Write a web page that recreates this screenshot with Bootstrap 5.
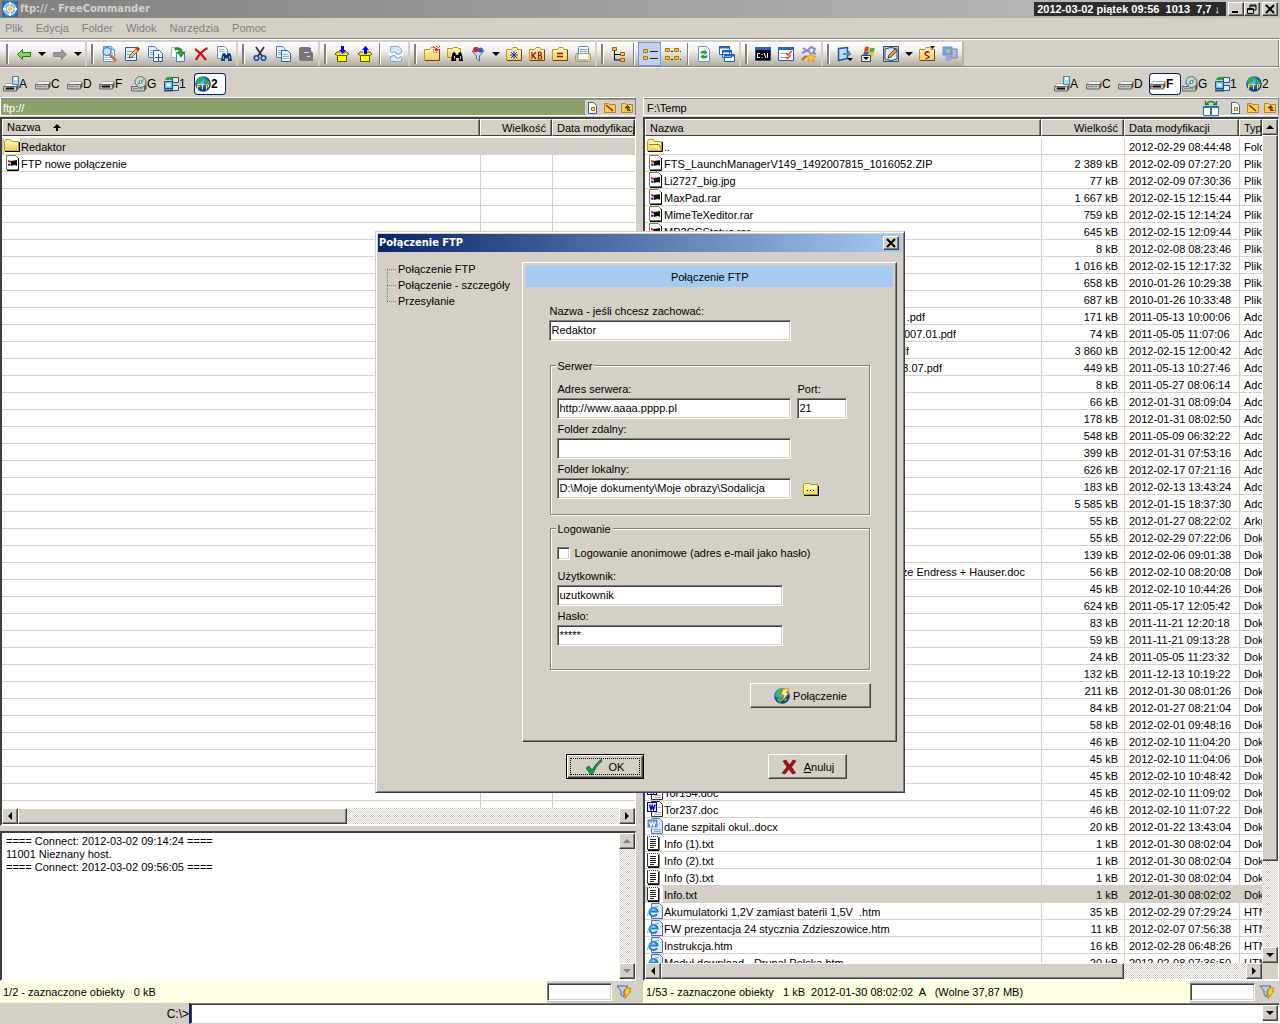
<!DOCTYPE html>
<html lang="pl">
<head>
<meta charset="utf-8">
<meta name="viewport" content="width=device-width, initial-scale=1">
<title>ftp:// - FreeCommander</title>
<link href="https://cdn.jsdelivr.net/npm/bootstrap@5.3.0/dist/css/bootstrap.min.css" rel="stylesheet">
<style>
:root{--face:#d4d0c8;--shade:#808080;--dark:#404040;--sky:#a6caf0}
body{font-family:"Liberation Sans",sans-serif;font-size:11px;line-height:16px;color:#000;background:var(--face)}
svg{display:block;flex:none}
.ic{width:16px;height:16px}
button,input{font:inherit;color:inherit;border-radius:0}
button{padding:0;border:0;background:none}
.raised{background:var(--face);border:1px solid;border-color:#fff var(--dark) var(--dark) #fff;box-shadow:inset -1px -1px var(--shade)}
.sunk{background:#fff;border:1px solid;border-color:var(--shade) #fff #fff var(--shade);box-shadow:inset 1px 1px var(--dark),inset -1px -1px var(--face)}
.app-title{height:18px;background:linear-gradient(90deg,#808080,#c0c0c0);color:var(--face);padding:0 2px;gap:2px}
.caption{font-family:"DejaVu Sans Condensed","DejaVu Sans",sans-serif;font-weight:bold}
.clock{background:#2b2b2b;color:#fff;height:14px;line-height:14px;padding:0 6px 0 3px;white-space:pre}
.winbtn{width:16px;height:14px}
.menu{height:20px;color:var(--shade);gap:13px;padding-left:5px}
.menu a{color:inherit;text-decoration:none}
.tools{height:30px;border:1px solid;border-color:var(--shade) #fff #fff;border-left:0;box-shadow:inset 0 1px #fff,inset -1px -1px var(--shade);padding:3px 0 1px}
.band{background:linear-gradient(#fff,#f2f0ec 35%,#d4d0c8 65%,#b3ab9f);border-right:2px solid var(--face);padding-right:1px}
.band:first-child{padding-left:2px}
.band:last-child{border-right-color:#b8b4aa}
.grip{width:3px;margin:2px 3px 2px 4px;border-left:2px solid var(--shade);border-right:1px solid #fff}
.tb{width:23px;display:flex;align-items:center;justify-content:center}
.tb.on{background:#c1d2ee;border:1px solid #7a96df}
.dd{width:13px;display:flex;align-items:center;justify-content:center}
.vsep{width:2px;margin:1px 3px;background:var(--shade);border-right:1px solid #fff}
.drives{height:29px;padding:2px 2px 0 3px}
.drive{width:32px;height:20px;display:flex;align-items:center;white-space:nowrap;font-size:12px}
.drive.on{width:30px;margin-right:2px;background:#fff;border-radius:3px;box-shadow:0 0 0 1px #0a246a;font-weight:bold}
.panes{gap:7px;padding-right:1px;min-height:0}
.pane{flex:1 1 0;min-width:0}
.pathbar{height:19px;flex:none;border:1px solid #fff;border-right-color:var(--shade);box-shadow:inset 0 1px var(--shade);padding:2px 0 0 3px}
.ftp-path{background:#8ca16b;color:#fff;padding-left:2px}
.path-icons{gap:1px;background:var(--face);align-self:stretch}
.filebox{flex:1 1 0;margin-top:1px;background:#fff;border:2px solid;border-right-width:1px;border-color:var(--dark) #fff #fff var(--dark);min-height:0}
.rows{flex:1 1 0;min-width:0;min-height:0;overflow:hidden}
.files{width:100%;table-layout:fixed;border-collapse:separate;border-spacing:0}
.files td,.files th{white-space:nowrap;overflow:hidden;font-weight:normal}
.files th{padding:0;border-bottom:2px solid #fff}
.headcell{height:17px;line-height:17px;background:var(--face);border:1px solid;border-color:#fff var(--dark) var(--dark) #fff;box-shadow:inset -1px 0 var(--shade);padding:0 5px 0 4px}
.files td{height:17px;line-height:14px;padding:2px 0 0 4px;border-bottom:1px solid var(--face)}
.files td+td{border-left:1px solid var(--face)}
.files .num{text-align:right;padding-right:6px}
.files td:first-child{padding:0 0 0 2px}
.files tr.sel td{background:var(--face)}
.entry{display:flex;height:16px;line-height:18px}
.entry .ic{margin-right:1px}
.sel .ic{background:#fff}
.tail{text-align:right;overflow:hidden}
.c-size{width:72px}.c-date{width:83px}.c-sizer{width:83px}.c-dater{width:115px}.c-type{width:23px}
.track{background:repeating-conic-gradient(#fff 0 25%,#d4d0c8 0 50%) 0 0/2px 2px}
.sbtn{width:16px;height:16px;flex:none;display:flex;align-items:center;justify-content:center}
.corner{background:var(--face)}
.log{height:150px;flex:none;margin-top:5px;border:2px solid;border-right-width:1px;border-color:var(--dark) #fff #fff var(--dark);background:#fff}
.logtext{line-height:13px;padding:2px 4px;white-space:pre}
.status{height:22px;flex:none;background:#ffffe1}
.status .msg{white-space:pre;padding-left:3px}
.filt{background:var(--face);padding-right:4px;gap:4px}
.filt input{width:65px;height:18px}
.cmd{height:21px;flex:none}
.prompt{width:189px;text-align:right;line-height:22px;font-size:12px}
.cmdbox{border:1px solid;border-color:var(--shade) #fff var(--face) var(--shade);box-shadow:inset 1px 1px var(--dark);background:#fff;padding:1px 1px 0 2px;border-left:2px solid #0a246a}
.cmdbox input{border:0;outline:0;background:none;min-width:0}
.veil{pointer-events:none}
.dlg{width:530px;background:var(--face);border:1px solid;border-color:var(--face) var(--dark) var(--dark) var(--face);box-shadow:inset 1px 1px #fff,inset -1px -1px var(--shade);padding:2px;pointer-events:auto}
.dlg-title{height:18px;background:linear-gradient(90deg,#0a246a,#a6caf0);color:#fff;padding:0 3px 0 1px}
.dlg-body{padding:9px 5px 11px 9px}
.tree{width:136px;padding:0}
.tree li{padding-left:11px;position:relative;white-space:nowrap}
.tree li::before{content:"";position:absolute;left:0;top:8px;width:9px;border-top:1px dotted var(--shade)}
.tree li+li::after{content:"";position:absolute;left:0;top:-8px;height:16px;border-left:1px dotted var(--shade)}
.sheet{border:1px solid;border-color:#fff var(--dark) var(--dark) #fff;box-shadow:inset -1px -1px var(--shade);padding:3px;margin-top:1px;height:480px;width:376px}
.sheet-head{background:var(--sky);height:21px;line-height:22px;text-align:center}
.sheet-body{padding:15px 22px 0 23px}
.sheet label{display:block;height:18px;line-height:18px}
.sheet .sunk,.filt .sunk{padding:0 1px;outline:0;display:block}
.sheet .sunk{height:21px;margin-bottom:1px;padding-bottom:2px}
.w-name{width:242px}.w-addr{width:234px}.w-port{width:50px}.w-user{width:226px}
.etch{position:relative;border:1px solid var(--shade);box-shadow:1px 1px #fff,inset 1px 1px #fff;padding:0 6px;width:320px;margin:0 0 0 1px;min-width:0}
.etch legend{position:absolute;top:-8px;left:5px;width:auto;margin:0;padding:0 2px 0 1px;background:var(--face);font-size:11px;line-height:16px;float:none}
.server{height:150px;margin-top:24px;padding-top:14px}
.addr-row{gap:6px}
.login{height:142px;margin-top:13px;padding-top:15px}
.anon{gap:4px;margin-bottom:5px}
.sheet .tick{appearance:none;width:13px;height:13px;margin:0;flex:none;padding:0}
.pushb{display:flex;align-items:center;justify-content:center;gap:3px;height:25px}
.go{width:121px;margin:13px 0 0 auto}
.okb{width:78px;border-color:#000;box-shadow:inset 1px 1px #fff,inset -1px -1px var(--dark),inset -2px -2px var(--shade);outline:1px dotted #000;outline-offset:-5px}
.noa{width:79px}
.foot{padding:12px 50px 0 179px}
</style>
</head>
<body class="vh-100 overflow-hidden d-flex flex-column position-relative">

<svg width="0" height="0" class="position-absolute" aria-hidden="true">
<defs>
<linearGradient id="gy" x2="0" y2="1"><stop stop-color="#fffbc8"/><stop offset="1" stop-color="#f4c860"/></linearGradient>
<radialGradient id="gb" cx=".4" cy=".35"><stop stop-color="#8fd6ff"/><stop offset=".7" stop-color="#1b6cd0"/><stop offset="1" stop-color="#0a3a8a"/></radialGradient>
</defs>
<symbol id="logo" viewBox="0 0 16 16"><rect width="16" height="16" fill="#35679b"/><circle cx="8" cy="8" r="7.500" fill="#3a8be0"/><circle cx="8" cy="8" r="5.800" fill="#7cc0f5" stroke="#d8efff"/><path d="M8 1v3M8 12v3M1 8h3M12 8h3" stroke="#fff" stroke-width="2"/><circle cx="8" cy="8" r="2.800" fill="#f7c54a" stroke="#fff6c0"/></symbol>
<symbol id="back" viewBox="0 0 16 16"><path d="M1.500 8.500l5-5v3h8v4h-8v3z" fill="#8fd05a" stroke="#1e7a1e"/></symbol>
<symbol id="fwd" viewBox="0 0 16 16"><path d="M14.500 8.500l-5-5v3h-8v4h8v3z" fill="#999" stroke="#888"/></symbol>
<symbol id="down" viewBox="0 0 8 5"><path d="M0 0h8L4 4z"/></symbol>
<symbol id="paper" viewBox="0 0 16 16"><path d="M2.500.5h8l3 3v12h-11z" fill="#f4f8ff" stroke="#6a8fc8"/><path d="M10.500.5v3h3" fill="#c4d8f4" stroke="#6a8fc8"/><path d="M4 5.500h6M4 7.500h8M4 9.500h8M4 11.500h8M4 13.500h6" stroke="#9bbbe6"/></symbol>
<symbol id="view" viewBox="0 0 16 16"><use href="#paper"/><circle cx="6" cy="5.500" r="4" fill="#bfe3ff" stroke="#4b86c8" stroke-width="1.500"/><path d="M9 9l6 6" stroke="#c86c34" stroke-width="2.500"/></symbol>
<symbol id="edit" viewBox="0 0 16 16"><path d="M1.500 1.500h11v13h-11z" fill="#e4eefc" stroke="#2858a8"/><path d="M3 5.500h7M3 8.500h5M3 11.500h8" stroke="#7ba4dc"/><path d="M5 12l1-3 7-7 2 2-7 7z" fill="#f7c54a" stroke="#604020" stroke-width=".8"/><path d="M12.500 1.500l2.500 2.500" stroke="#d02020" stroke-width="3"/></symbol>
<symbol id="pages" viewBox="0 0 16 16"><path d="M1.500.5h6l3 3v8h-9z" fill="#eef5ff" stroke="#4a7cc4"/><path d="M3 4.500h5M3 6.500h5M3 8.500h5" stroke="#8fb4e4"/><path d="M6.500 4.500h6l3 3v8h-9z" fill="#eef5ff" stroke="#2f5fae"/><path d="M8 8.500h5M8 10.500h6M8 12.500h6" stroke="#8fb4e4"/></symbol>
<symbol id="copyto" viewBox="0 0 16 16"><use href="#pages"/><path d="M8 8h6v7H8z" fill="#fff"/><path d="M11.500 8v7M8 11.500h7" stroke="#20509c"/></symbol>
<symbol id="moveto" viewBox="0 0 16 16"><path d="M1.500 1.500h7v10h-7z" fill="#fff" stroke="#5b88c8" stroke-dasharray="1 1"/><path d="M6.500 6.500h8v9h-8z" fill="#eef5ff" stroke="#4a7cc4"/><path d="M5 2q8-1 7 4h3l-4 5-4-5h3q0-3-5-2z" fill="#2da02d" stroke="#0c640c" stroke-width=".6"/></symbol>
<symbol id="del" viewBox="0 0 16 16"><path d="M2 3q6 4 11 11M14.500 2Q7 6 3 14" stroke="#d01010" stroke-width="2.200" fill="none"/></symbol>
<symbol id="find" viewBox="0 0 16 16"><path d="M1.500.5h7l3 3v9h-10z" fill="#f4f8ff" stroke="#6a8fc8"/><path d="M3 3.500h5M3 5.500h6" stroke="#9bbbe6"/><path d="M5 15l1-6q.500-2 2-2t2 2h1q.500-2 2-2t2 2l1 6h-4v-3h-3v3z" fill="#0b3a78"/><path d="M7.500 10v3M13.500 10v3" stroke="#6fa8e0"/></symbol>
<symbol id="cut" viewBox="0 0 16 16"><path d="M4 1l6 9M12 1L6 10" stroke="#334" stroke-width="1.800"/><circle cx="4.500" cy="12" r="2.300" fill="none" stroke="#1850b0" stroke-width="1.600"/><circle cx="11.500" cy="12" r="2.300" fill="none" stroke="#1850b0" stroke-width="1.600"/></symbol>
<symbol id="paste" viewBox="0 0 16 16"><path d="M1 2l2-1h8l2 1v3l2 2v8H3l-2-1z" fill="#777"/><path d="M6 6.500h5M9 10.500h3" stroke="#ddd"/></symbol>
<symbol id="box" viewBox="0 0 16 16"><path d="M1 8l3 2h8l3-2-2-2h-3M1 8l2-2h3" fill="#ee0" stroke="#550"/><path d="M3.500 9.500h9v6h-9z" fill="#ff0" stroke="#550"/></symbol>
<symbol id="pack" viewBox="0 0 16 16"><use href="#box"/><path d="M7 0h3v4h2L8.500 8 5 4h2z" fill="#0000e0"/></symbol>
<symbol id="unpack" viewBox="0 0 16 16"><use href="#box"/><path d="M7 8h3V4h2L8.500 0 5 4h2z" fill="#0000e0"/></symbol>
<symbol id="split" viewBox="0 0 16 16"><path d="M2.500.5h8l3 3v12h-11z" fill="#dce8f8" stroke="#8fa8c8"/><path d="M1 9q4-4 7 0t7-2" fill="none" stroke="#fff" stroke-width="3"/><path d="M3 7q3-2 5 0t5 0M3 11q3-3 5 0t5-1" fill="none" stroke="#7fa4d8" stroke-width="1.200"/></symbol>
<symbol id="fold" viewBox="0 0 16 16"><path d="M.5 3.500h5l1.500-2h4l1 2h3.500v11H.5z" fill="url(#gy)" stroke="#b09a20"/><path d="M1 14.500h14.500V4" fill="none" stroke="#604c10"/></symbol>
<symbol id="nfold" viewBox="0 0 16 16"><use href="#fold"/><path d="M9 0l7 7M16 0L9 7M12.500 0v7M9 3.500h7" stroke="#e02020" stroke-width="1.200" stroke-dasharray="1 1"/></symbol>
<symbol id="ffold" viewBox="0 0 16 16"><path d="M.5 2.500h5l1-1h4l1 1h2v9H.5z" fill="url(#gy)" stroke="#b09a20"/><path d="M4 15l1-6q.500-3 2-3t2 3h2q.500-3 2-3t2 3l1 6h-4v-3h-3v3z"/><path d="M7.500 10v3M13.500 10v3" stroke="#ccc"/></symbol>
<symbol id="funnel" viewBox="0 0 16 16"><path d="M2 5h12L9.500 10v5l-3-2v-3z" fill="#c8d8ec" stroke="#506890"/><circle cx="6" cy="3.500" r="2.800" fill="#d02828"/><circle cx="10.500" cy="4" r="2.500" fill="#2860c8"/></symbol>
<symbol id="sfold" viewBox="0 0 16 16"><use href="#fold"/><path d="M8 5v8M4 9h8M5 6l6 6M11 6l-6 6" stroke="#1030e0"/></symbol>
<symbol id="kfold" viewBox="0 0 16 16"><use href="#fold"/><path d="M3 6v7M7 6L4 9.500 7 13M9.500 6v7h2.500q1.500-1.800-.5-3.500h-2 2q1.500-1.800 0-3.500z" fill="none" stroke="#a01010" stroke-width="1.200"/></symbol>
<symbol id="efold" viewBox="0 0 16 16"><use href="#fold"/><path d="M5 7.500h6M5 10.500h6" stroke="#a01010" stroke-width="1.500"/></symbol>
<symbol id="print" viewBox="0 0 16 16"><rect x="3.500" y=".5" width="10" height="9" rx="1" fill="#fff" stroke="#5080b8"/><path d="M5 3.500h7M5 5.500h7" stroke="#6fa0dc"/><rect x=".5" y="7.500" width="15" height="8" rx="2" fill="#e8d8a0" stroke="#a89860"/><path d="M2.500 7v7h10" fill="none" stroke="#78a4d8"/><path d="M4 8h9v5H4z" fill="#f8f8f4"/></symbol>
<symbol id="tree" viewBox="0 0 16 16"><path d="M3.500 4v10h6M3.500 8.500h6" fill="none" stroke="#000"/><path d="M1.500 1.500h4v3h-4zM9.500 6.500h4v3h-4zM9.500 12.500h4v3h-4z" fill="#f7c040" stroke="#906010"/></symbol>
<symbol id="list" viewBox="0 0 16 16"><path d="M1.500 3.500h4v3h-4zM1.500 10.500h4v3h-4z" fill="#f7c040" stroke="#b07800"/><path d="M8 5.500h8M8 12.500h8" stroke="#222"/></symbol>
<symbol id="icons" viewBox="0 0 16 16"><path d="M.5 2.500h4v3h-4zM9.500 2.500h4v3h-4zM.5 10.500h4v3h-4zM9.500 10.500h4v3h-4z" fill="#f7c040" stroke="#b07800"/><path d="M6 5.500h2M15 5.500h1M6 13.500h2M15 13.500h1" stroke="#222"/></symbol>
<symbol id="refresh" viewBox="0 0 16 16"><path d="M2.500.5h8l3 3v12h-11z" fill="#f4f8ff" stroke="#6f8fc0"/><path d="M4.500 8q0-4 4-3V3.500l3 3-3 2.500V7.500Q6 7 4.500 8zM11.500 9q0 4-4 3v1.500l-3-3 3-2.500v1.500q2.500.5 4-.500z" fill="#20a030"/></symbol>
<symbol id="wins" viewBox="0 0 16 16"><path d="M.5.500h10v8H.500zM3.500 4.500h9v7h-9zM5.500 8.500h10v7h-10z" fill="#fff" stroke="#1c62c0"/><path d="M0 1.500h11M3 5.500h10M5 9.500h11" stroke="#1c62c0" stroke-width="2"/></symbol>
<symbol id="dos" viewBox="0 0 16 16"><path d="M.5 1.500h15v13H.5z" fill="#000" stroke="#205090"/><path d="M0 2.500h16" stroke="#2468b8" stroke-width="3"/><path d="M5 7.500H2.500v4H5M7 8v1M7 11v1M9 7l2 5M12.500 7v5" stroke="#fff" fill="none"/></symbol>
<symbol id="tasks" viewBox="0 0 16 16"><path d="M.5 1.500h15v13H.5z" fill="#fff" stroke="#205ab0"/><path d="M0 2.500h16" stroke="#2468c8" stroke-width="3"/><path d="M2 7.500h6M2 11.500h6" stroke="#90b0d8"/><path d="M8 7l2 2 4-4M8 11l1.500 1.500L13 9" fill="none" stroke="#e03020" stroke-width="1.300"/></symbol>
<symbol id="gear" viewBox="0 0 16 16"><path d="M2 2l4 3 4-4 4 2-2 4 3 1M1 7l6-3 3 4" fill="none" stroke="#8888d0" stroke-width="2"/><path d="M10 7l1.500 3 3.500.3-2.500 2.200.8 3.500-3.300-2-3.200 2 .8-3.500L5 10.300l3.500-.3z" fill="#ffc830" stroke="#c88810" stroke-width=".7"/><path d="M1 14l4-4" stroke="#a87020" stroke-width="2"/></symbol>
<symbol id="open" viewBox="0 0 16 16"><path d="M1.500 2.500l9-1v11l-9 2z" fill="#b8d8f8" stroke="#2058a0" stroke-width="1.500"/><path d="M6 8h8M12 5v5" stroke="#6088b8" stroke-width="2"/><path d="M10 12h6l-3 3z"/></symbol>
<symbol id="winp" viewBox="0 0 16 16"><path d="M5 1q3-1 4 0L8 6Q6 5 4 6z" fill="#e04020"/><path d="M10 1.500q3 1 5 0L14 6q-3 1-5 0z" fill="#60b030"/><path d="M4 6h5l-1 3H3z" fill="#2870d8"/><path d="M9 7h5l-1 4H9z" fill="#f0c020"/><path d="M1.500 9.500h9v6h-9z" fill="#eee" stroke="#444"/><path d="M3 11h6l-3 3z"/></symbol>
<symbol id="note" viewBox="0 0 16 16"><path d="M.5.5h15v15H.5z" fill="#f7d040" stroke="#1850a8"/><path d="M2 3q6-3 12 0v10q-6 3-12 0z" fill="#d8e8ff" stroke="#1850a8"/><path d="M5 12l1-3 6-6 2 2-6 6z" fill="#f0a030" stroke="#402010" stroke-width=".8"/></symbol>
<symbol id="dollar" viewBox="0 0 16 16"><use href="#fold"/><path d="M10.500 6.500Q8 5 6.500 6.500t1.500 3 1.800 2-3.300 1.500" stroke="#a01010" stroke-width="1.300" fill="none"/><path d="M11 0h5l-2.500 3z"/></symbol>
<symbol id="pc" viewBox="0 0 16 16"><path d="M9 3h6v9H9z" fill="#b8b8d8" stroke="#7878a8"/><path d="M1 1h9v8H1z" fill="#58b0f8" stroke="#7090c8"/><path d="M4 9h5v6H3z" fill="#a0a8d0"/><circle cx="6" cy="5" r="2" fill="#ffb040"/></symbol>
<symbol id="hdd" viewBox="0 0 16 16"><path d="M.5 8.500l3-3h12l-2 3z" fill="#f2f2f2" stroke="#999" stroke-width=".8"/><path d="M13.500 8.500l2-3v5l-2 3z" fill="#555"/><path d="M.5 8.500h13v4.500H.5z" fill="#c4c4c4" stroke="#666"/><path d="M2 10.500h6" stroke="#888"/><path d="M9 10.500h2" stroke="#20c020"/></symbol>
<symbol id="fix" viewBox="0 0 16 16"><use href="#hdd"/><path d="M3 10.500h8" stroke="#111" stroke-width="2"/><path d="M1 10.500h2" stroke="#e02020"/></symbol>
<symbol id="flop" viewBox="0 0 16 16"><use href="#hdd" y="2"/><path d="M9.500.5h6v8h-6z" fill="#a8dcec" stroke="#4888a0"/><path d="M11 1h3v3h-3z" fill="#fff"/><path d="M3 12.500h8" stroke="#111" stroke-width="2"/></symbol>
<symbol id="cd" viewBox="0 0 16 16"><use href="#hdd" y="2"/><circle cx="9.500" cy="6" r="5.500" fill="#c8d8d8" stroke="#667"/><path d="M9.500 6l4-3.500M9 6L5.500 9.500" stroke="#60c080" stroke-width="1.500"/><circle cx="9.500" cy="6" r="1.500" fill="#fff" stroke="#667"/></symbol>
<symbol id="net" viewBox="0 0 16 16"><path d="M9.500 1.500h6v5h-6zM9.500 9.500h6v5h-6z" fill="#d8e8f8" stroke="#305080"/><path d="M1.500 5.500h8v7h-8z" fill="#50d0f0" stroke="#304880"/><path d="M3.500 7.500h4v3h-4z" fill="#fff"/><path d="M1 14.500h9" stroke="#304880" stroke-width="2"/><path d="M2 4q1-4 6-3l1-1v4H5z" fill="#30a030"/></symbol>
<symbol id="ftp" viewBox="0 0 16 16"><circle cx="8" cy="8" r="7.800" fill="url(#gb)"/><path d="M3 2q4-2 6 0l-2 4-3 1-3-1zM10 3l4 2 1 4-3-1zM2 12l4 3H4z" fill="#30b040"/><path d="M2.500 13.500v-5H5M2.500 10.500h2M5.500 8.500h4M7.500 8.500v5M11.500 13.500v-5h2v2.500h-2" fill="none" stroke="#ffee20"/></symbol>
<symbol id="newf" viewBox="0 0 16 16"><path d="M3.500 2.500h5l3 3v8h-8z" fill="#fff" stroke="#3060b0"/><path d="M6.500 7.500h3v3h-3z" fill="#ffd060" stroke="#b07800"/></symbol>
<symbol id="sm" viewBox="0 0 16 16"><path d="M2.500 3.500h4l1 1h6v8h-11z" fill="#f8cc60" stroke="#b88820"/></symbol>
<symbol id="root" viewBox="0 0 16 16"><use href="#sm"/><path d="M4 5l7 6" stroke="#a02010" stroke-width="1.500"/></symbol>
<symbol id="up" viewBox="0 0 16 16"><use href="#sm"/><path d="M12 10.500H8.500V8H6l2.500-2.500L11 8H8.500" stroke="#704000" fill="#704000"/></symbol>
<symbol id="swap" viewBox="0 0 16 16"><path d="M.5 6.500h7v9h-7zM8.500 6.500h7v9h-7z" fill="#fff" stroke="#2070c8"/><path d="M0 7h16" stroke="#2070c8" stroke-width="2"/><path d="M3 4q5-5 10 0M2.500 1v3.500H6M13.500 1v3.500H10" fill="none" stroke="#208020" stroke-width="1.300"/></symbol>
<symbol id="bolt" viewBox="0 0 16 16"><path d="M1 2h11L8 7v6l-3-2V7z" fill="#b8ccec" stroke="#506890"/><path d="M10 4h5l-2 3h2l-6 8 1-5H8z" fill="#ffd020" stroke="#c07800" stroke-width=".8"/></symbol>
<symbol id="dir" viewBox="0 0 16 16"><path d="M.5 3.500l1-2h5l1 2h7v9.500H.5z" fill="url(#gy)" stroke="#b0a000"/><path d="M1 13.500h14.500V4" fill="none" stroke="#000"/></symbol>
<symbol id="updir" viewBox="0 0 16 16"><use href="#dir"/><path d="M2 6.500h10l3 6.500" fill="#ffe890" stroke="#a08000"/></symbol>
<symbol id="win" viewBox="0 0 16 16"><path d="M2.500.5h9l3 3v11h-12z" fill="#fff" stroke="#777"/><path d="M14.500 3v12.500H3" fill="none" stroke="#000"/><path d="M4 5l4 1-1 2-3-1z" fill="#e02020"/><path d="M4 8.500l3 .5-1 2-2-.5z" fill="#2020e0"/><path d="M7 6l6-1v6l-2-1-4 1z" fill="#111"/></symbol>
<symbol id="doc" viewBox="0 0 16 16"><path d="M4.500.5h8l3 3v12h-11z" fill="#fff" stroke="#333"/><path d="M8 11.500h6M8 13.500h6M11 6.500h3" stroke="#aaa"/><path d="M.5 1.500h9v9h-9z" fill="#fff" stroke="#0000a0" stroke-width="1.200"/><path d="M2.500 3.500L4 8.500l1.200-4 1.200 4L8 3.500" fill="none" stroke="#0000b0" stroke-width="1.500"/></symbol>
<symbol id="docx" viewBox="0 0 16 16"><path d="M4.500.5h8l3 3v12h-11z" fill="#d4e4fa" stroke="#5078c0"/><path d="M7 11.500h7M7 13.500h7" stroke="#8ab"/><path d="M.5 1.500h10v8H.5z" fill="#5a88d8" stroke="#a8c0ec"/><path d="M2.500 3.500L4 8l1.500-4L7 8l1.500-4.500" fill="none" stroke="#fff" stroke-width="1.300"/></symbol>
<symbol id="txt" viewBox="0 0 16 16"><path d="M.5 1.500h11v13H.5z" fill="#fff" stroke="#333"/><path d="M12 2v13.500H1" fill="none" stroke="#000"/><path d="M1 1.500h11" stroke="#fff" stroke-dasharray="1 1" stroke-width="2"/><path d="M3 4.500h6M3 6.500h6M3 8.500h6M3 10.500h6M3 12.500h4" stroke="#222"/></symbol>
<symbol id="htm" viewBox="0 0 16 16"><path d="M4.500.5h8l3 3v12h-11z" fill="#e4ecfa" stroke="#4a68b0"/><circle cx="6.500" cy="8.500" r="4" fill="#d8f0ff"/><path d="M10 11A4 4 0 1 1 10.500 8.500H4" fill="none" stroke="#2080d0" stroke-width="2.200"/><path d="M.5 13Q1 5 12 3" stroke="#58b0f0" fill="none"/></symbol>
<symbol id="browse" viewBox="0 0 16 16"><path d="M.5 4.500l1-2h5l1 1h7v10H.5z" fill="#fff8a0" stroke="#a8a000"/><path d="M2 8h12v5H2z" fill="#fcdc78"/><path d="M1 14.500h14.500V5" fill="none" stroke="#000"/><path d="M2 5.500h12" stroke="#fff"/><path d="M4 9.500h1M7 9.500h1M10 9.500h1" stroke="#000"/></symbol>
<symbol id="conn" viewBox="0 0 16 16"><circle cx="8" cy="8" r="7.800" fill="url(#gb)"/><path d="M3 3q4-3 6-1L7 7l-4 2-2-1zM4 10l4 1-1 4q-3-1-4-3zM10 11l4-1-3 4z" fill="#48b848"/><path d="M9 1h6l-3 4h3l-7 8 2-6H7z" fill="#fff0a0" stroke="#c89010"/></symbol>
<symbol id="check" viewBox="0 0 16 16"><path d="M0 9l3-2 3 4Q10 4 15.500 0l.5 2Q10 7 6 16H5z" fill="#10a818" stroke="#002860" stroke-width=".6"/></symbol>
<symbol id="cross" viewBox="0 0 16 16"><path d="M2 2l3-1 3.500 5L12 1l3 1-4.500 6 4 6-3 1L8 10l-4 5-3-1 5-6z" fill="#a01010" stroke="#600" stroke-width=".6"/></symbol>
<symbol id="al" viewBox="0 0 8 8"><path d="M6 0v8L2 4z"/></symbol>
<symbol id="ar" viewBox="0 0 8 8"><path d="M2 0v8l4-4z"/></symbol>
<symbol id="au" viewBox="0 0 8 8"><path d="M0 6h8L4 2z"/></symbol>
<symbol id="ad" viewBox="0 0 8 8"><path d="M0 2h8L4 6z"/></symbol>
</svg>

<header class="flex-shrink-0">
  <div class="app-title d-flex align-items-center fw-bold">
    <svg class="ic"><use href="#logo"/></svg><span class="flex-fill caption">ftp:// - FreeCommander</span>
    <span class="clock">2012-03-02 piątek 09:56  1013  7,7 ↓</span>
    <div class="d-flex">
    <button class="raised winbtn" aria-label="Minimalizuj"><svg width="12" height="10"><path d="M3 8h6" stroke="#000" stroke-width="2"/></svg></button>
    <button class="raised winbtn" aria-label="Przywróć"><svg width="12" height="10"><path d="M5 4V1h6v5H9M5 2h6M2.500 4.500h6v5h-6zM2 5.500h7" fill="none" stroke="#000"/></svg></button>
    </div>
    <button class="raised winbtn" aria-label="Zamknij"><svg width="12" height="10"><path d="M3 1l8 8M11 1L3 9" stroke="#000" stroke-width="2"/></svg></button>
  </div>
  <nav class="menu d-flex align-items-center">
    <a href="#">Plik</a><a href="#">Edycja</a><a href="#">Folder</a><a href="#">Widok</a><a href="#">Narzędzia</a><a href="#">Pomoc</a>
  </nav>
  <div class="tools d-flex" id="tools" role="toolbar" aria-label="Narzędzia"></div>
  <div class="drives d-flex justify-content-between align-items-center">
    <div class="d-flex" data-drives="6"></div>
    <div class="d-flex" data-drives="3"></div>
  </div>
</header>

<main class="panes d-flex flex-fill">
  <section class="pane d-flex flex-column">
    <div class="pathbar ftp-path d-flex align-items-center"><span class="flex-fill">ftp://</span>
      <span class="path-icons d-flex align-items-center"><svg class="ic"><use href="#newf"/></svg><svg class="ic"><use href="#root"/></svg><svg class="ic"><use href="#up"/></svg></span></div>
    <div class="filebox d-flex flex-column">
      <div class="rows">
        <table class="files"><colgroup><col><col class="c-size"><col class="c-date"></colgroup>
          <thead><tr><th><div class="headcell d-flex align-items-center">Nazwa<svg class="ms-2" width="12" height="8"><path d="M4 4l4-4 4 4H9v3H7V4z"/></svg></div></th><th><div class="headcell text-end">Wielkość</div></th><th><div class="headcell">Data modyfikacji</div></th></tr></thead>
          <tbody id="left"></tbody></table>
      </div>
      <div class="track d-flex">
        <button class="raised sbtn" aria-label="W lewo"><svg width="8" height="8"><use href="#al"/></svg></button>
        <div class="raised" style="width:52%"></div>
        <button class="raised sbtn ms-auto" aria-label="W prawo"><svg width="8" height="8"><use href="#ar"/></svg></button>
      </div>
    </div>
    <div class="log d-flex">
      <div class="logtext flex-fill">==== Connect: 2012-03-02 09:14:24 ====
11001 Nieznany host.
==== Connect: 2012-03-02 09:56:05 ====</div>
      <div class="track d-flex flex-column justify-content-between">
        <button class="raised sbtn" disabled aria-label="W górę"><svg width="8" height="8" fill="#808080"><use href="#au"/></svg></button>
        <button class="raised sbtn" disabled aria-label="W dół"><svg width="8" height="8" fill="#808080"><use href="#ad"/></svg></button>
      </div>
    </div>
    <div class="status d-flex align-items-center"><span class="msg flex-fill">1/2 - zaznaczone obiekty   0 kB</span>
      <span class="filt d-flex align-items-center align-self-stretch"><input class="sunk" type="text" aria-label="Filtr lewy"><svg class="ic"><use href="#bolt"/></svg></span></div>
  </section>

  <section class="pane d-flex flex-column">
    <div class="pathbar d-flex align-items-center"><span class="flex-fill">F:\Temp</span>
      <span class="path-icons d-flex align-items-center"><svg class="ic me-2"><use href="#swap"/></svg><svg class="ic"><use href="#newf"/></svg><svg class="ic"><use href="#root"/></svg><svg class="ic"><use href="#up"/></svg></span></div>
    <div class="filebox d-flex flex-column">
      <div class="d-flex rows">
        <div class="rows">
          <table class="files"><colgroup><col><col class="c-sizer"><col class="c-dater"><col class="c-type"></colgroup>
            <thead><tr><th><div class="headcell">Nazwa</div></th><th><div class="headcell text-end">Wielkość</div></th><th><div class="headcell">Data modyfikacji</div></th><th><div class="headcell">Typ</div></th></tr></thead>
            <tbody id="right"></tbody></table>
        </div>
        <div class="track d-flex flex-column">
          <button class="raised sbtn" aria-label="W górę"><svg width="8" height="8"><use href="#au"/></svg></button>
          <div class="raised" style="height:86%"></div>
          <button class="raised sbtn mt-auto" aria-label="W dół"><svg width="8" height="8"><use href="#ad"/></svg></button>
        </div>
      </div>
      <div class="d-flex">
        <div class="track d-flex flex-fill">
          <button class="raised sbtn" aria-label="W lewo"><svg width="8" height="8"><use href="#al"/></svg></button>
          <div class="raised" style="width:75%"></div>
          <button class="raised sbtn ms-auto" aria-label="W prawo"><svg width="8" height="8"><use href="#ar"/></svg></button>
        </div>
        <div class="sbtn corner"></div>
      </div>
    </div>
    <div class="status d-flex align-items-center"><span class="msg flex-fill">1/53 - zaznaczone obiekty   1 kB  2012-01-30 08:02:02  A   (Wolne 37,87 MB)</span>
      <span class="filt d-flex align-items-center align-self-stretch"><input class="sunk" type="text" aria-label="Filtr prawy"><svg class="ic"><use href="#bolt"/></svg></span></div>
  </section>
</main>

<footer class="cmd d-flex">
  <label class="prompt" for="cmd">C:\&gt;</label>
  <div class="cmdbox d-flex flex-fill"><input id="cmd" class="flex-fill" type="text"><button class="raised sbtn" aria-label="Historia"><svg width="8" height="8"><use href="#ad"/></svg></button></div>
</footer>

<div class="veil position-absolute top-0 start-0 w-100 h-100 d-flex align-items-center justify-content-center">
  <form class="dlg" role="dialog" aria-labelledby="dt">
    <div class="dlg-title d-flex align-items-center"><span class="flex-fill caption" id="dt">Połączenie FTP</span>
      <button type="button" class="raised winbtn" aria-label="Zamknij okno"><svg width="12" height="10"><path d="M3 1l8 8M11 1L3 9" stroke="#000" stroke-width="2"/></svg></button></div>
    <div class="dlg-body">
      <div class="d-flex">
        <ul class="tree list-unstyled mb-0"><li>Połączenie FTP</li><li>Połączenie - szczegóły</li><li>Przesyłanie</li></ul>
        <div class="sheet">
          <div class="sheet-head">Połączenie FTP</div>
          <div class="sheet-body">
            <label for="nm">Nazwa - jeśli chcesz zachować:</label>
            <input id="nm" class="sunk w-name" type="text" value="Redaktor">
            <fieldset class="etch server"><legend>Serwer</legend>
              <div class="d-flex addr-row">
                <div><label for="ad1">Adres serwera:</label><input id="ad1" class="sunk w-addr" type="text" value="http://www.aaaa.pppp.pl"></div>
                <div><label for="pt">Port:</label><input id="pt" class="sunk w-port" type="text" value="21"></div>
              </div>
              <label for="fz">Folder zdalny:</label><input id="fz" class="sunk w-addr" type="text">
              <label for="fl">Folder lokalny:</label>
              <div class="d-flex align-items-center"><input id="fl" class="sunk w-addr" type="text" value="D:\Moje dokumenty\Moje obrazy\Sodalicja"><button type="button" class="ms-2 ps-1" aria-label="Wybierz folder"><svg class="ic"><use href="#browse"/></svg></button></div>
            </fieldset>
            <fieldset class="etch login"><legend>Logowanie</legend>
              <div class="anon d-flex align-items-center"><input id="an" class="sunk tick" type="checkbox"><label for="an">Logowanie anonimowe (adres e-mail jako hasło)</label></div>
              <label for="us">Użytkownik:</label><input id="us" class="sunk w-user" type="text" value="uzutkownik">
              <label for="pw">Hasło:</label><input id="pw" class="sunk w-user" type="text" value="*****">
            </fieldset>
            <button type="button" class="raised pushb go"><svg class="ic"><use href="#conn"/></svg>Połączenie</button>
          </div>
        </div>
      </div>
      <div class="foot d-flex justify-content-between">
        <button type="button" class="raised pushb okb"><svg class="ic me-1"><use href="#check"/></svg>OK</button>
        <button type="button" class="raised pushb noa"><svg class="ic me-1"><use href="#cross"/></svg><span><u>A</u>nuluj</span></button>
      </div>
    </div>
  </form>
</div>

<script src="https://cdn.jsdelivr.net/npm/bootstrap@5.3.0/dist/js/bootstrap.bundle.min.js"></script>
<script>
const icon = n => `<svg class="ic"><use href="#${n}"/></svg>`;
// v = drop-down arrow, | = separator, * = pressed
const bands = ["back v fwd v", "view edit copyto moveto del find", "cut pages paste", "pack unpack | split",
  "nfold ffold funnel v sfold kfold efold print", "tree | *list icons | refresh wins", "dos tasks gear", "open winp note v dollar pc"];
document.getElementById("tools").innerHTML = bands.map(b => '<div class="band d-flex"><span class="grip"></span>' +
  b.split(" ").map(t => t === "v" ? '<button class="dd" aria-label="Więcej"><svg width="8" height="5"><use href="#down"/></svg></button>'
    : t === "|" ? '<span class="vsep"></span>'
    : `<button class="tb${t[0] === "*" ? " on" : ""}" aria-label="${t.replace("*", "")}">${icon(t.replace("*", ""))}</button>`).join("") + "</div>").join("");
const drives = [["flop","A"],["hdd","C"],["hdd","D"],["fix","F"],["cd","G"],["net","1"],["ftp","2"]];
document.querySelectorAll("[data-drives]").forEach(el => el.innerHTML = drives.map(([n, l], i) =>
  `<button class="drive${i == el.dataset.drives ? " on" : ""}">${icon(n)}${l}</button>`).join(""));

const row = (ic, name, cells, cls = "") => `<tr class="${cls}"><td><div class="entry">${ic ? icon(ic) : ""}${name}</div></td>${cells}</tr>`;
document.getElementById("left").innerHTML = row("dir", "Redaktor", "<td></td><td></td>", "sel") +
  row("win", "FTP nowe połączenie", "<td></td><td></td>") + row("", "", "<td></td><td></td>").repeat(50);

// icon | name | size | date | type | width of a right-aligned long name
const files = `updir|..||2012-02-29 08:44:48|Folder
win|FTS_LaunchManagerV149_1492007815_1016052.ZIP|2 389|2012-02-09 07:27:20|Plik
win|Li2727_big.jpg|77|2012-02-09 07:30:36|Plik
win|MaxPad.rar|1 667|2012-02-15 12:15:44|Plik
win|MimeTeXeditor.rar|759|2012-02-15 12:14:24|Plik
win|MP2CCStatus.rar|645|2012-02-15 12:09:44|Plik
win||8|2012-02-08 08:23:46|Plik
win||1 016|2012-02-15 12:17:32|Plik
win||658|2010-01-26 10:29:38|Plik
win||687|2010-01-26 10:33:48|Plik
win|.pdf|171|2011-05-13 10:00:06|Adobe|261
win|2007.01.pdf|74|2011-05-05 11:07:06|Adobe|292
win|.pdf|3 860|2012-02-15 12:00:42|Adobe|245
win|3.07.pdf|449|2011-05-13 10:27:46|Adobe|278
win||8|2011-05-27 08:06:14|Adobe
win||66|2012-01-31 08:09:04|Adobe
win||178|2012-01-31 08:02:50|Adobe
win||548|2011-05-09 06:32:22|Adobe
win||399|2012-01-31 07:53:16|Adobe
win||626|2012-02-17 07:21:16|Adobe
win||183|2012-02-13 13:43:24|Adobe
win||5 585|2012-01-15 18:37:30|Adobe
win||55|2012-01-27 08:22:02|Arkusz
doc||55|2012-02-29 07:22:06|Dokument
doc||139|2012-02-06 09:01:38|Dokument
doc|ze Endress + Hauser.doc|56|2012-02-10 08:20:08|Dokument|361
doc||45|2012-02-10 10:44:26|Dokument
doc||624|2011-05-17 12:05:42|Dokument
doc||83|2011-11-21 12:20:18|Dokument
doc||59|2011-11-21 09:13:28|Dokument
doc||24|2011-05-05 11:23:32|Dokument
doc||132|2011-12-13 10:19:22|Dokument
doc||211|2012-01-30 08:01:26|Dokument
doc||84|2012-01-27 08:21:04|Dokument
doc||58|2012-02-01 09:48:16|Dokument
doc||46|2012-02-10 11:04:20|Dokument
doc||45|2012-02-10 11:04:06|Dokument
doc||45|2012-02-10 10:48:42|Dokument
doc|Tor154.doc|45|2012-02-10 11:09:02|Dokument
doc|Tor237.doc|46|2012-02-10 11:07:22|Dokument
docx|dane szpitali okul..docx|20|2012-01-22 13:43:04|Dokument
txt|Info (1).txt|1|2012-01-30 08:02:04|Dokument
txt|Info (2).txt|1|2012-01-30 08:02:04|Dokument
txt|Info (3).txt|1|2012-01-30 08:02:04|Dokument
txt|Info.txt|1|2012-01-30 08:02:02|Dokument
htm|Akumulatorki 1,2V zamiast baterii 1,5V &nbsp;.htm|35|2012-02-29 07:29:24|HTML
htm|FW prezentacja 24 stycznia Zdzieszowice.htm|11|2012-02-07 07:56:38|HTML
htm|Instrukcja.htm|16|2012-02-28 06:48:26|HTML
htm|Moduł download - Drupal Polska.htm|20|2012-02-08 07:36:50|HTML`;
document.getElementById("right").innerHTML = files.split("\n").map(l => {
  const [ic, name, size, date, type, w] = l.split("|");
  return row(ic, w ? `<span class="tail" style="width:${w}px">${name}</span>` : `<span>${name}</span>`,
    `<td class="num">${size ? size + " kB" : ""}</td><td>${date}</td><td>${type}</td>`, name === "Info.txt" ? "sel" : "");
}).join("");
</script>
</body>
</html>
